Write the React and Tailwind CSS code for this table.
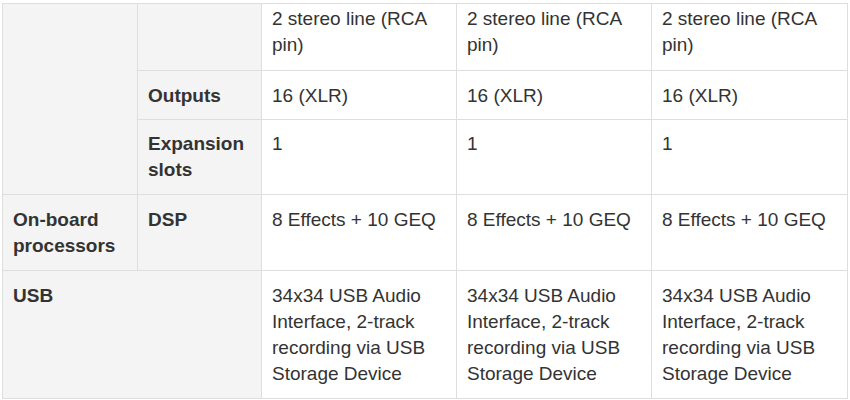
import React from 'react';

// Spec table fragment: mixer comparison, 3 model columns
const models = [0, 1, 2];

const head = 'bg-[#f4f4f4] font-bold px-[10px]';
const cell = 'bg-white px-[10px]';

export default function App() {
  return (
    <div className="w-[850px] h-[400px] bg-white pt-[3px] pl-[2px] font-['Liberation_Sans',Arial,sans-serif] text-[19px] leading-[26px] text-[#333]">
      <div className="grid w-fit grid-cols-[134px_123px_194px_194px_195px] grid-rows-[66px_48px_74px_75px_127px] gap-px bg-[#dedede] p-px">
        {/* rowspan carried from the section above */}
        <div className={`${head} row-span-3`} />

        {/* Inputs, continued */}
        <div className={head} />
        {models.map((m) => (
          <div key={`in-${m}`} className={`${cell} pt-[2px]`}>
            2 stereo line (RCA
            <br />
            pin)
          </div>
        ))}

        <div className={`${head} pt-[12px]`}>Outputs</div>
        {models.map((m) => (
          <div key={`out-${m}`} className={`${cell} pt-[12px]`}>16 (XLR)</div>
        ))}

        <div className={`${head} pt-[11px]`}>
          Expansion
          <br />
          slots
        </div>
        {models.map((m) => (
          <div key={`exp-${m}`} className={`${cell} pt-[11px]`}>1</div>
        ))}

        <div className={`${head} pt-[12px]`}>
          On-board
          <br />
          processors
        </div>
        <div className={`${head} pt-[12px]`}>DSP</div>
        {models.map((m) => (
          <div key={`dsp-${m}`} className={`${cell} pt-[12px]`}>8 Effects + 10 GEQ</div>
        ))}

        <div className={`${head} col-span-2 pt-[12px]`}>USB</div>
        {models.map((m) => (
          <div key={`usb-${m}`} className={`${cell} pt-[12px]`}>
            34x34 USB Audio
            <br />
            Interface, 2-track
            <br />
            recording via USB
            <br />
            Storage Device
          </div>
        ))}
      </div>
    </div>
  );
}
